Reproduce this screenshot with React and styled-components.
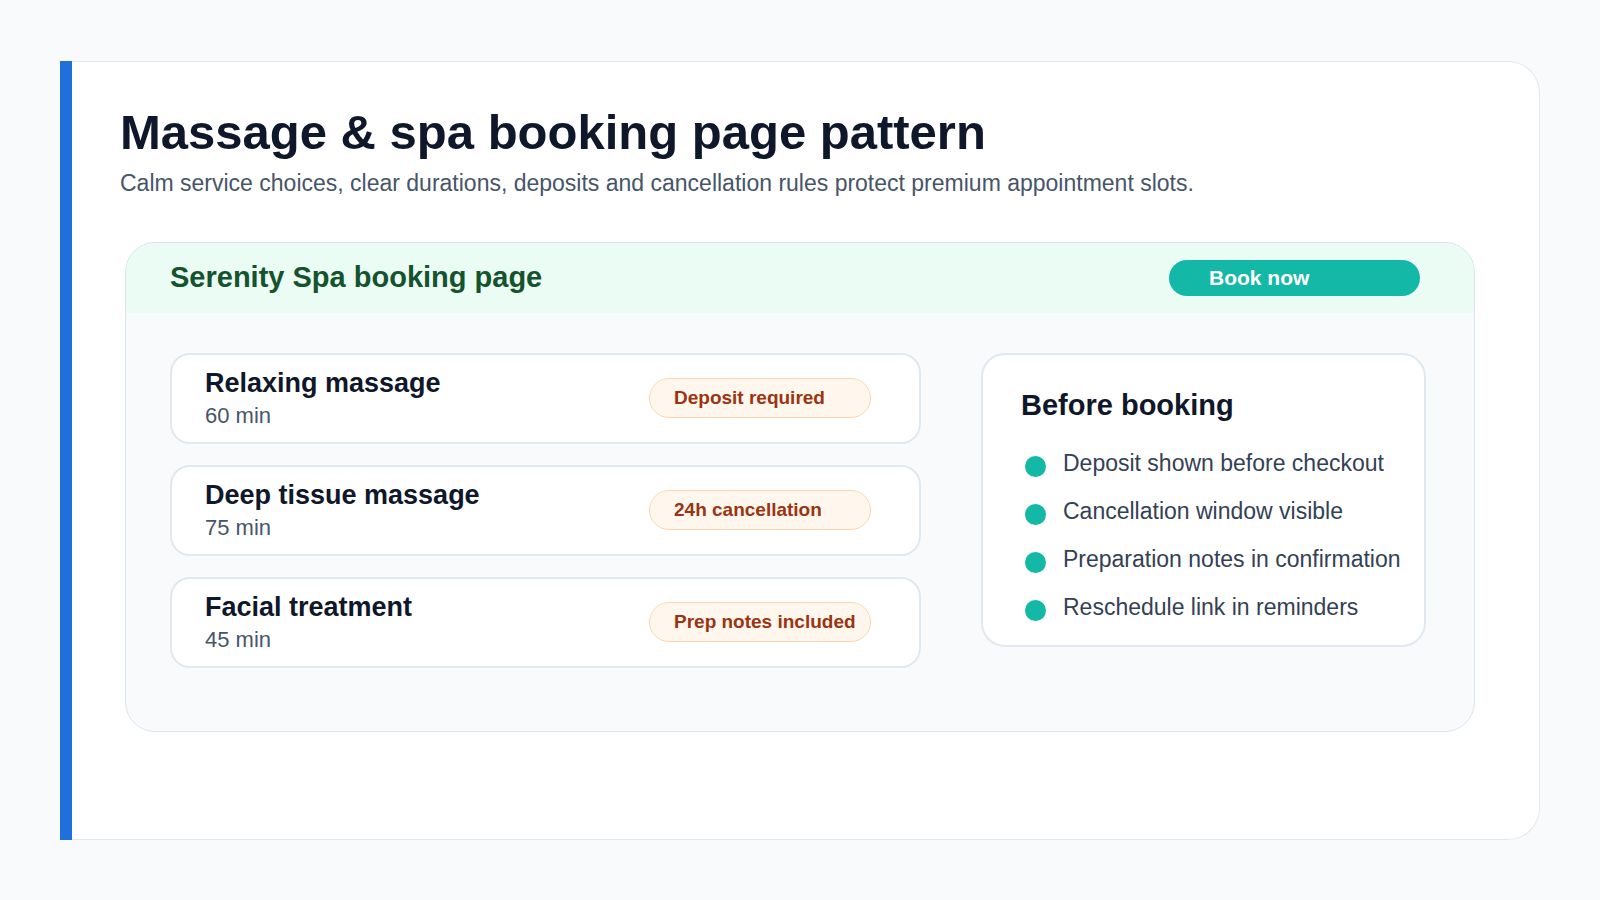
import React from 'react';
import styled, {createGlobalStyle} from 'styled-components';

const Global = createGlobalStyle`
  body { margin: 0; background: #f8fafc; font-family: "Liberation Sans", Arial, sans-serif; }
`;

const Page = styled.div`
  padding: 61px 60px 60px 60px;
  display: flex;
`;

const Accent = styled.div`
  width: 12px;
  background: #1f6fdc;
`;

const Card = styled.div`
  flex: 1;
  height: 779px;
  box-sizing: border-box;
  background: #fff;
  border: 1px solid #e2e8f0;
  border-left: none;
  border-radius: 0 32px 32px 0;
  padding: 44px 64px 0 48px;
`;

const Title = styled.h1`
  margin: 0;
  font-size: 49px;
  font-weight: 700;
  color: #0f172a;
  line-height: 1.1;
`;

const Subtitle = styled.p`
  margin: 10px 0 0;
  font-size: 23px;
  color: #475569;
`;

const Panel = styled.div`
  margin: 45px 0 0 5px;
  height: 490px;
  box-sizing: border-box;
  background: #f8fafc;
  border: 1px solid #dbe3ee;
  border-radius: 30px;
  overflow: hidden;
`;

const Band = styled.div`
  height: 70px;
  background: #eafcf3;
  display: flex;
  align-items: center;
  justify-content: space-between;
  padding: 0 54px 0 44px;
`;

const BandTitle = styled.h2`
  margin: 0;
  font-size: 29px;
  color: #14532d;
  font-weight: 700;
`;

const Button = styled.button`
  width: 251px;
  height: 36px;
  border: none;
  border-radius: 18px;
  background: #14b8a6;
  color: #fff;
  font: 700 21px "Liberation Sans", Arial, sans-serif;
  text-align: left;
  padding-left: 40px;
`;

const Body = styled.div`
  display: grid;
  grid-template-columns: 751px 445px;
  column-gap: 60px;
  padding: 40px 44px;
  align-items: start;
`;

const List = styled.div`
  display: flex;
  flex-direction: column;
  gap: 21px;
`;

const Service = styled.div`
  height: 91px;
  box-sizing: border-box;
  background: #fff;
  border: 2px solid #e2e8f0;
  border-radius: 20px;
  display: flex;
  align-items: center;
  justify-content: space-between;
  padding: 0 48px 0 33px;
`;

const Name = styled.div`
  font-size: 27px;
  font-weight: 700;
  color: #0f172a;
`;

const Duration = styled.div`
  font-size: 22px;
  color: #475569;
  margin-top: 4px;
`;

const Badge = styled.span`
  width: 222px;
  height: 40px;
  box-sizing: border-box;
  border: 1px solid #fed7aa;
  background: #fff7ed;
  border-radius: 20px;
  color: #9a3412;
  font-size: 19px;
  font-weight: 700;
  display: flex;
  align-items: center;
  padding-left: 24px;
  white-space: nowrap;
`;

const Checklist = styled.div`
  background: #fff;
  border: 2px solid #e2e8f0;
  border-radius: 24px;
  height: 294px;
  box-sizing: border-box;
  padding: 34px 20px 0 38px;
`;

const CheckTitle = styled.h3`
  margin: 0 0 18px;
  font-size: 29px;
  font-weight: 700;
  color: #0f172a;
`;

const Item = styled.div`
  display: flex;
  align-items: center;
  gap: 17px;
  height: 48px;
  font-size: 23px;
  color: #334155;
`;

const Dot = styled.span`
  width: 21px;
  height: 21px;
  border-radius: 50%;
  background: #14b8a6;
  margin-left: 4px;
  margin-top: 6px;
  flex: none;
`;

const services = [
    {name: 'Relaxing massage', time: '60 min', badge: 'Deposit required'},
    {name: 'Deep tissue massage', time: '75 min', badge: '24h cancellation'},
    {name: 'Facial treatment', time: '45 min', badge: 'Prep notes included'}
];

const notes = [
    'Deposit shown before checkout',
    'Cancellation window visible',
    'Preparation notes in confirmation',
    'Reschedule link in reminders'
];

export default function App() {
    return (
        <>
            <Global />
            <Page>
                <Accent />
                <Card>
                    <Title>Massage &amp; spa booking page pattern</Title>
                    <Subtitle>
                        Calm service choices, clear durations, deposits and cancellation rules protect premium appointment slots.
                    </Subtitle>
                    <Panel>
                        <Band>
                            <BandTitle>Serenity Spa booking page</BandTitle>
                            <Button>Book now</Button>
                        </Band>
                        <Body>
                            <List>
                                {services.map(s => (
                                    <Service key={s.name}>
                                        <div>
                                            <Name>{s.name}</Name>
                                            <Duration>{s.time}</Duration>
                                        </div>
                                        <Badge>{s.badge}</Badge>
                                    </Service>
                                ))}
                            </List>
                            <Checklist>
                                <CheckTitle>Before booking</CheckTitle>
                                {notes.map(n => (
                                    <Item key={n}><Dot />{n}</Item>
                                ))}
                            </Checklist>
                        </Body>
                    </Panel>
                </Card>
            </Page>
        </>
    );
}
